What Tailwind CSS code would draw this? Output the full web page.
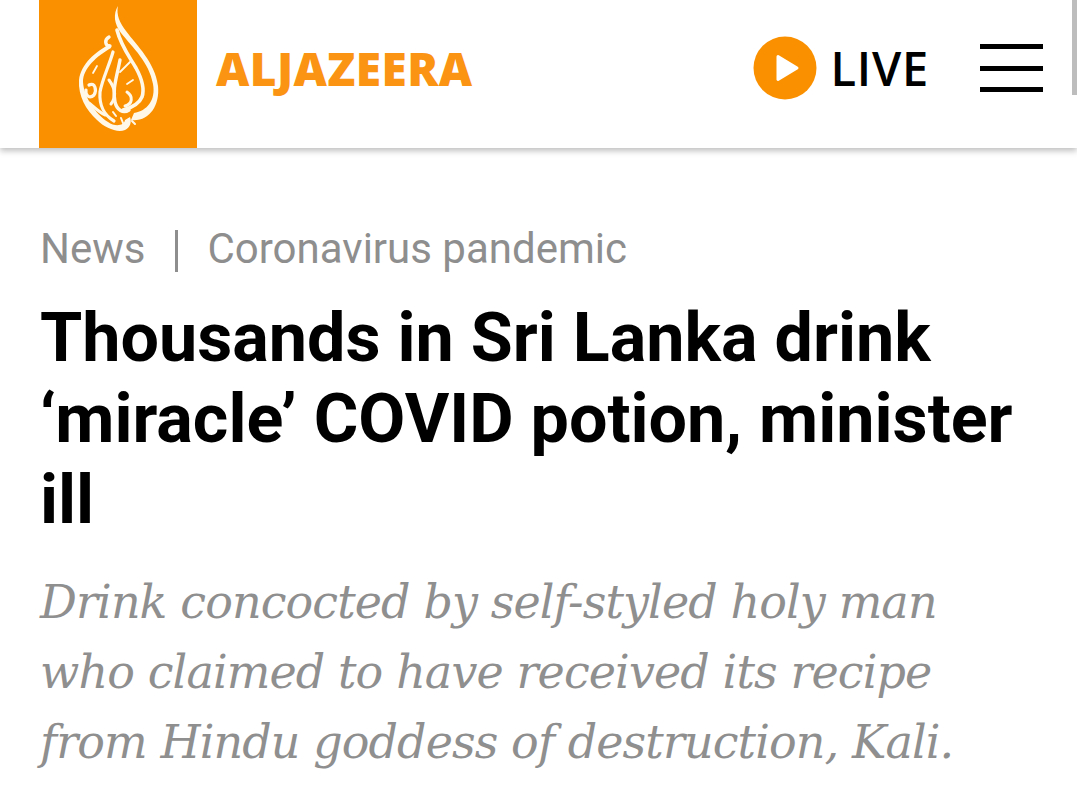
<!DOCTYPE html>
<html>
<head>
<meta charset="utf-8">
<script src="https://cdn.jsdelivr.net/npm/@tailwindcss/browser@4"></script>
</head>
<body class="bg-white w-[1077px] h-[807px] overflow-hidden relative">
<header class="h-[148px] flex items-center pl-[39px] pr-[34px] pb-[12px] shadow-[0_3px_6px_rgba(0,0,0,0.25)] relative">
  <div class="w-[158px] h-[148px] bg-[#fa9000] self-start shrink-0">
    <svg width="158" height="148" viewBox="0 0 158 148" fill="none" stroke="#fff8e8" stroke-linecap="round" stroke-linejoin="round">
      <path fill="#fff8e8" stroke="none" d="M79 6C74 14 75 24 82 33C94 48 110 62 114 84C117 100 108 111 95 113L92 120C110 122 121 106 119 86C116 62 98 46 87 31C81 23 77 15 79 6Z"/>
      <path d="M78 30C82 46 90 56 97 68C103 79 106 88 103 97C100 104 92 108 84 110" stroke-width="3.6"/>
      <path d="M70 37C65 40 66 46 71 46" stroke-width="3.4"/>
      <path fill="#fff8e8" stroke="none" d="M71 44C56 52 42 64 40 80C39 96 47 110 58 120C66 128 78 133 86 130C91 128 93 122 91 117L86 120C85 126 76 127 69 122C57 114 45 98 44 82C44 68 58 56 72 48Z"/>
      <path d="M74 52C70 66 63 80 61 92C60 106 66 116 75 121" stroke-width="3.2"/>
      <path d="M81 60C78 76 73 90 76 102C78 110 84 114 90 110" stroke-width="3.4"/>
      <path d="M81 72L91 62M54 73L58 66M88 84L94 80" stroke-width="1.8"/>
      <path d="M50 85C56 82 58 90 55 95C51 99 46 96 47 90" stroke-width="3.2"/>
      <path d="M70 80C76 88 78 96 72 104M88 92C94 96 94 104 86 106M50 103C56 108 60 112 66 115" stroke-width="3"/>
      <path d="M82 118L86 128M93 121L96 124M74 112L77 116" stroke-width="2"/>
    </svg>
  </div>
  <div class="ml-[19px] font-['Open_Sans',sans-serif] font-extrabold text-[46px] leading-none text-[#fa9412] tracking-[0.4px]">ALJAZEERA</div>
  <div class="ml-auto flex items-center">
    <svg width="64" height="64" viewBox="0 0 64 64"><circle cx="32" cy="32" r="31.5" fill="#fa9000"/><path d="M25 20.5L44 32L25 43.5Z" fill="#fff" stroke="#fff" stroke-width="3" stroke-linejoin="round"/></svg>
    <span class="ml-[13px] font-['Open_Sans',sans-serif] font-semibold text-[47px] leading-none tracking-[0.8px] text-black">LIVE</span>
    <div class="ml-[51px] w-[63px] h-[48px] flex flex-col justify-between">
      <div class="h-[5px] bg-black"></div><div class="h-[5px] bg-black"></div><div class="h-[5px] bg-black"></div>
    </div>
  </div>
  <div class="absolute right-0 top-0 w-[5px] h-[95px] bg-[#bdbdbd]"></div>
</header>
<main class="pl-[40px] pr-[40px] pt-[75px]">
  <div class="flex items-center font-['Roboto',sans-serif] text-[42px] leading-[52px] text-[#8e8e8e]">
    <span>News</span>
    <span class="ml-[30px] mr-[29px] w-[3px] h-[42px] bg-[#8e8e8e] translate-y-[2px]"></span>
    <span>Coronavirus pandemic</span>
  </div>
  <h1 class="mt-[23px] font-['Roboto',sans-serif] font-bold text-[68.25px] leading-[81px] text-black whitespace-nowrap">Thousands in Sri Lanka drink<br>‘miracle’ COVID potion, minister<br>ill</h1>
  <p class="mt-[26px] font-['DejaVu_Serif',serif] italic text-[46px] leading-[70px] tracking-[-0.9px] text-[#8f8f8f] whitespace-nowrap">Drink concocted by self-styled holy man<br>who claimed to have received its recipe<br>from Hindu goddess of destruction, Kali.</p>
</main>
</body>
</html>
